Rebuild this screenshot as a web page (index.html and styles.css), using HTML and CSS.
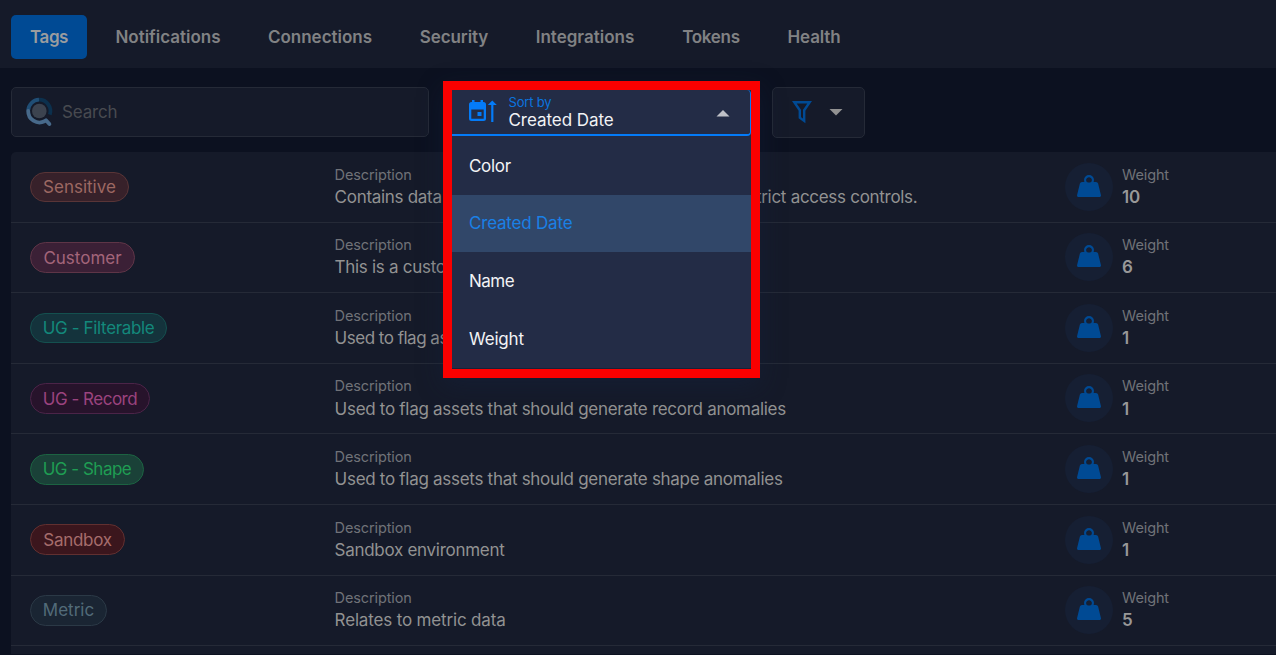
FILE: index.html
```
<!DOCTYPE html>
<html lang="en">
<head>
<meta charset="utf-8">
<title>Tags</title>
<link rel="stylesheet" href="styles.css">
</head>
<body>
<svg class="defs" width="0" height="0">
  <symbol id="weight" viewBox="0 0 24 22"><circle cx="12" cy="5" r="3.800" fill="none" stroke="#004a94" stroke-width="2.400"/><path d="M5 7h14a2.200 2.200 0 0 1 2.100 1.600l2.800 11.300c.3 1.200-.4 2.100-1.500 2.100H1.600C.5 22-.2 21.100.1 19.900L2.900 8.600A2.200 2.200 0 0 1 5 7z"/><circle cx="12" cy="5" r="2.600" fill="#161f33"/></symbol>
</svg>
<nav class="tabs">
  <a class="tab active">Tags</a>
  <a class="tab t-notifications">Notifications</a>
  <a class="tab t-connections">Connections</a>
  <a class="tab t-security">Security</a>
  <a class="tab t-integrations">Integrations</a>
  <a class="tab t-tokens">Tokens</a>
  <a class="tab t-health">Health</a>
</nav>
<div class="toolbar">
  <div class="search">
    <svg class="search-icon" width="28" height="30" viewBox="0 0 28 30" fill="none">
      <path d="M2.200 13.500A11.300 11.300 0 0 1 13 2.700" stroke="#204e75" stroke-width="3.800"/>
      <path d="M13 2.700A11.300 11.300 0 0 1 23.800 17.600" stroke="#0c304d" stroke-width="3.800"/>
      <path d="M2.200 14A11.300 11.300 0 0 0 18.500 24.300L20 23.200L23.400 27" stroke="#47698a" stroke-width="3.800" stroke-linecap="round" stroke-linejoin="round"/>
      <circle cx="13.300" cy="14" r="7.300" fill="#3c434f"/>
    </svg>
    <span>Search</span>
  </div>
  <div class="sort-slot">
    <div class="sort-frame">
      <div class="sort-field">
        <svg class="sort-icon" width="28" height="23" viewBox="0 0 28 23">
          <path fill="#047bf8" fill-rule="evenodd" d="M3 0h2.500v2h6V0H14v2h.5A2.500 2.500 0 0 1 17 4.500v14a2.500 2.500 0 0 1-2.500 2.500h-12A2.500 2.500 0 0 1 0 18.500v-14A2.500 2.500 0 0 1 2.500 2H3zM2.300 9.500V18.700h12.400V9.500zM8.500 12h4v4h-4z"/>
          <path fill="#047bf8" d="M23.300 0.500l4.500 4.500h-3.400v17h-2.200V5H18.800z"/>
        </svg>
        <div class="sort-text">
          <div class="sort-label">Sort by</div>
          <div class="sort-value">Created Date</div>
        </div>
        <svg class="caret" width="14" height="7" viewBox="0 0 14 7"><path fill="#bfc1c8" d="M0.500 6.500L7 0l6.500 6.500z"/></svg>
      </div>
      <div class="menu">
        <div class="option o-color"><span>Color</span></div>
        <div class="option selected"><span>Created Date</span></div>
        <div class="option o-name"><span>Name</span></div>
        <div class="option o-weight"><span>Weight</span></div>
      </div>
    </div>
  </div>
  <div class="filter">
    <svg width="20" height="23" viewBox="0 0 20 23"><path fill="none" stroke="#004a94" stroke-width="2.400" stroke-linejoin="miter" d="M2.300 1.300h15.400L12.200 9.200v10.700L7.800 16.600V9.200z"/></svg>
    <svg width="14" height="7" viewBox="0 0 14 7"><path fill="#929292" d="M0.500 0h13L7 6.500z"/></svg>
  </div>
</div>
<main class="list">
  <div class="row"><div class="c-tag"><span class="tag sensitive">Sensitive</span></div><div class="c-desc"><div class="label">Description</div><div class="text">Contains data that is considered sensitive and needs strict access controls.</div></div><div class="disc"><svg width="24" height="22"><use href="#weight"/></svg></div><div class="c-weight"><div class="label">Weight</div><div class="num">10</div></div></div>
  <div class="row"><div class="c-tag"><span class="tag customer">Customer</span></div><div class="c-desc"><div class="label">Description</div><div class="text">This is a custom</div></div><div class="disc"><svg width="24" height="22"><use href="#weight"/></svg></div><div class="c-weight"><div class="label">Weight</div><div class="num">6</div></div></div>
  <div class="row"><div class="c-tag"><span class="tag filterable">UG - Filterable</span></div><div class="c-desc"><div class="label">Description</div><div class="text clipped">Used to flag ass</div></div><div class="disc"><svg width="24" height="22"><use href="#weight"/></svg></div><div class="c-weight"><div class="label">Weight</div><div class="num">1</div></div></div>
  <div class="row"><div class="c-tag"><span class="tag record">UG - Record</span></div><div class="c-desc"><div class="label">Description</div><div class="text">Used to flag assets that should generate record anomalies</div></div><div class="disc"><svg width="24" height="22"><use href="#weight"/></svg></div><div class="c-weight"><div class="label">Weight</div><div class="num">1</div></div></div>
  <div class="row"><div class="c-tag"><span class="tag shape">UG - Shape</span></div><div class="c-desc"><div class="label">Description</div><div class="text">Used to flag assets that should generate shape anomalies</div></div><div class="disc"><svg width="24" height="22"><use href="#weight"/></svg></div><div class="c-weight"><div class="label">Weight</div><div class="num">1</div></div></div>
  <div class="row"><div class="c-tag"><span class="tag sandbox">Sandbox</span></div><div class="c-desc"><div class="label">Description</div><div class="text">Sandbox environment</div></div><div class="disc"><svg width="24" height="22"><use href="#weight"/></svg></div><div class="c-weight"><div class="label">Weight</div><div class="num">1</div></div></div>
  <div class="row"><div class="c-tag"><span class="tag metric">Metric</span></div><div class="c-desc"><div class="label">Description</div><div class="text relates">Relates to metric data</div></div><div class="disc"><svg width="24" height="22"><use href="#weight"/></svg></div><div class="c-weight"><div class="label">Weight</div><div class="num">5</div></div></div>
</main>
</body>
</html>
```

FILE: styles.css
```
* { box-sizing: border-box; }
body {
  margin: 0;
  height: 655px;
  overflow: hidden;
  background: #0c1120;
  color: #929292;
  font-family: Inter, "Liberation Sans", sans-serif;
  font-size: 17px;
  letter-spacing: -0.29px;
}
svg { display: block; }
.defs { position: absolute; }

.tabs {
  display: flex;
  height: 68px;
  padding: 15px 0 0 11px;
  background: #151a29;
  font-weight: 600;
  letter-spacing: 0;
  color: #818284;
}
.tab {
  height: 44px;
  line-height: 44px;
  margin-right: 10px;
  text-align: center;
  white-space: nowrap;
}
.tab.active { width: 76px; background: #004a94; color: #9a9c9f; border-radius: 5px; letter-spacing: -0.4px; }
.t-notifications { width: 142px; }
.t-connections { width: 142px; }
.t-security { width: 106px; letter-spacing: -0.1px; }
.t-integrations { width: 136px; }
.t-tokens { width: 96px; letter-spacing: -0.3px; }
.t-health { width: 90px; letter-spacing: -0.15px; }

.toolbar {
  display: flex;
  align-items: flex-start;
  height: 84.25px;
  padding: 19px 0 0 11px;
}
.search {
  display: flex;
  align-items: center;
  width: 418px;
  height: 50px;
  padding-left: 14px;
  border: 1px solid #252a37;
  border-radius: 5px;
  background: #151a29;
  color: #484a50;
  letter-spacing: -0.15px;
}
.search-icon { margin-right: 8px; }
.sort-slot { position: relative; width: 343px; height: 50px; }
.sort-frame {
  position: absolute;
  z-index: 2;
  left: 14px;
  top: -6px;
  width: 317px;
  height: 297px;
  border: 9px solid #fa0000;
  background: #232c46;
  box-shadow: 0 8px 24px rgba(20, 34, 64, 0.4);
  letter-spacing: -0.2px;
}
.sort-field {
  display: flex;
  align-items: flex-start;
  height: 46px;
  padding: 0 20px 0 17px;
  border-bottom: 2px solid #047bf8;
  border-right: 1px solid #047bf8;
  border-radius: 0 4px 4px 0;
}
.sort-icon { margin: 10px 11.500px 0 0; overflow: visible; }
.sort-text { flex: 1; }
.sort-label { height: 16px; margin-top: 4px; font-size: 13px; line-height: 16px; letter-spacing: -0.2px; color: #0b74df; }
.sort-value { line-height: 20px; color: #f2f3f5; letter-spacing: -0.05px; }
.caret { margin-top: 20px; }
.menu { height: 233px; padding-top: 1px; border-bottom: 1px solid #172238; }
.option {
  display: flex;
  align-items: center;
  height: 57.7px;
  padding-left: 17px;
  color: #f2f3f5;
}
.option.selected { padding-bottom: 1px; background: #314769; color: #1a80e6; }
.o-name { letter-spacing: -0.5px; }
.o-color { letter-spacing: -0.3px; }
.filter {
  display: flex;
  align-items: center;
  gap: 17px;
  width: 93px;
  height: 51px;
  padding-left: 19px;
  border: 1px solid #252a37;
  border-radius: 5px;
  background: #151a29;
}

.list {
  height: 501.500px;
  margin-left: 11px;
  border-top-left-radius: 5px;
  background: #151a29;
}
.row {
  display: flex;
  align-items: center;
  height: 70.55px;
  padding: 0 0 0.375px 19px;
  border-bottom: 1px solid #252a37;
}
.c-tag { display: flex; width: 304.600px; margin-top: 0.375px; }
.tag {
  display: flex;
  justify-content: center;
  align-items: center;
  height: 30.600px;
  border: 1px solid;
  border-radius: 16px;
  white-space: nowrap;
}
.sensitive { width: 99px; color: #9d6862; background: #37212a; border-color: #593537; letter-spacing: 0; }
.customer { width: 105px; color: #a3657a; background: #3b2036; border-color: #5e3547; letter-spacing: 0; }
.filterable { width: 137px; color: #13887b; background: #14333c; border-color: #14504f; letter-spacing: -0.35px; }
.record { width: 120px; color: #9b437f; background: #27132b; border-color: #4b2448; letter-spacing: -0.5px; }
.shape { width: 114px; color: #1f9d53; background: #1a4138; border-color: #1c6342; letter-spacing: -0.5px; }
.sandbox { width: 95px; color: #a66d6c; background: #3b161d; border-color: #613030; }
.metric { width: 77px; color: #526b79; background: #1a2533; border-color: #2b3946; letter-spacing: 0; }
.c-desc { width: 730.400px; white-space: nowrap; }
.label { margin-bottom: 0.125px; font-size: 14.500px; line-height: 20px; color: #707278; letter-spacing: -0.12px; }
.text, .num { line-height: 24px; }
.clipped { letter-spacing: -0.5px; }
.relates { letter-spacing: -0.16px; }
.num { font-weight: 600; color: #989898; }
.disc {
  display: flex;
  justify-content: center;
  align-items: center;
  width: 48px;
  height: 48px;
  margin-right: 9px;
  padding-bottom: 2px;
  border-radius: 50%;
  background: #161f33;
  fill: #004a94;
}
```
